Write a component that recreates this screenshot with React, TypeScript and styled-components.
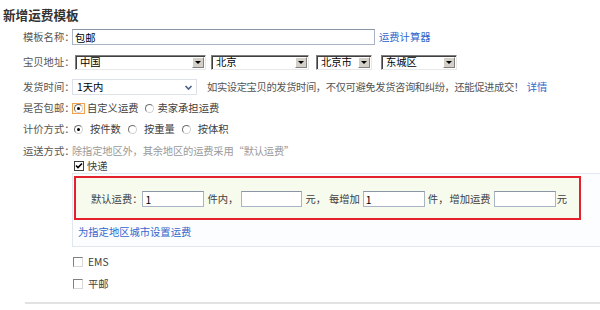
import React from 'react';
import styled, { createGlobalStyle } from 'styled-components';

const GlobalStyle = createGlobalStyle`
  html, body { margin: 0; padding: 0; background: #fff; }
  body {
    font-family: "Noto Sans CJK SC", "Noto Sans", sans-serif;
    font-size: 10.3px;
    line-height: 12px;
    color: #404040;
  }
`;

const Page = styled.div`
  width: 600px;
  height: 310px;
  overflow: hidden;
  background: #fff;
`;

const Title = styled.h2`
  margin: 8px 0 0 3px;
  font-size: 12.6px;
  line-height: 14px;
  font-weight: bold;
  color: #333;
`;

const Row = styled.div<{ $h: number; $mt: number; $pl?: number }>`
  display: flex;
  align-items: center;
  height: ${(p) => p.$h}px;
  margin-top: ${(p) => p.$mt}px;
  padding-left: ${(p) => (p.$pl ?? 23)}px;
  white-space: nowrap;
`;

const Label = styled.span`
  width: 49px;
  flex: none;
  color: #555;
`;

const Text = styled.span<{ $ml?: number; $mr?: number; $c?: string; $ls?: number }>`
  margin-left: ${(p) => p.$ml ?? 0}px;
  margin-right: ${(p) => p.$mr ?? 0}px;
  color: ${(p) => p.$c ?? '#404040'};
  letter-spacing: ${(p) => p.$ls ?? 0}px;
`;

const Link = styled.a<{ $ml?: number }>`
  color: #3366cc;
  text-decoration: none;
  margin-left: ${(p) => p.$ml ?? 0}px;
  cursor: pointer;
`;

const TextInput = styled.input<{ $w: number; $mx?: number }>`
  width: ${(p) => p.$w}px;
  height: 16px;
  box-sizing: border-box;
  margin: 0 ${(p) => p.$mx ?? 0}px;
  padding: 0 2px;
  border: 1px solid #a9b4c4;
  border-top-color: #8a95a6;
  background: #fff;
  font: inherit;
  color: #000;
  outline: none;
`;

const ClassicSelect = styled.div<{ $w: number; $ml: number }>`
  width: ${(p) => p.$w}px;
  height: 15px;
  margin-left: ${(p) => p.$ml}px;
  box-sizing: border-box;
  display: flex;
  align-items: center;
  border: 1px solid;
  border-color: #808080 #e8e8e8 #e8e8e8 #808080;
  box-shadow: inset 1px 1px 0 #404040;
  background: #fff;
  padding-left: 4px;
  color: #000;
`;

const SelectValue = styled.span`
  flex: 1;
`;

const ClassicArrow = styled.span`
  width: 12px;
  height: 11px;
  margin-right: 1px;
  box-sizing: border-box;
  background: #d4d0c8;
  border: 1px solid;
  border-color: #fff #808080 #808080 #fff;
  display: flex;
  align-items: center;
  justify-content: center;
  &::after {
    content: '';
    border-left: 3px solid transparent;
    border-right: 3px solid transparent;
    border-top: 3px solid #000;
  }
`;

const XpSelect = styled.div<{ $w: number }>`
  width: ${(p) => p.$w}px;
  height: 16px;
  box-sizing: border-box;
  display: flex;
  align-items: center;
  border: 1px solid #dde2ea;
  background: #fff;
  padding-left: 4px;
  color: #000;
`;

const XpArrow = styled.span`
  width: 14px;
  height: 14px;
  margin-right: 1px;
  display: flex;
  align-items: center;
  justify-content: center;
`;

const RadioWrap = styled.span<{ $focus?: boolean; $ml?: number }>`
  display: inline-flex;
  align-items: center;
  justify-content: center;
  width: 13px;
  height: 11px;
  margin-left: ${(p) => p.$ml ?? 0}px;
  box-sizing: border-box;
  border: 1px solid ${(p) => (p.$focus ? '#f0a050' : 'transparent')};
  background: ${(p) => (p.$focus ? '#fff6e8' : 'transparent')};
`;

const Radio = styled.span<{ $checked?: boolean }>`
  width: 9px;
  height: 9px;
  border-radius: 50%;
  box-sizing: border-box;
  border: 1px solid;
  border-color: #707070 #d0d0d0 #d0d0d0 #707070;
  background: #fff;
  display: flex;
  align-items: center;
  justify-content: center;
  &::after {
    content: '';
    display: ${(p) => (p.$checked ? 'block' : 'none')};
    width: 3px;
    height: 3px;
    border-radius: 50%;
    background: #000;
  }
`;

const Check = styled.span<{ $checked?: boolean }>`
  width: 10px;
  height: 10px;
  flex: none;
  box-sizing: border-box;
  border: 1px solid;
  border-color: ${(p) => (p.$checked ? '#404040' : '#808080 #d8d8d8 #d8d8d8 #808080')};
  background: #fff;
  display: flex;
  align-items: center;
  justify-content: center;
`;

const Panel = styled.div`
  margin: 1px 0 0 72px;
  height: 74px;
  box-sizing: border-box;
  border: 1px solid #e1e7ef;
  border-right: none;
  background: #fcfdff;
`;

const Highlight = styled.div`
  margin: 2px 0 0 1px;
  width: 507px;
  height: 44px;
  box-sizing: border-box;
  border: 2px solid #e3202b;
  background: #f7fbee;
  display: flex;
  align-items: center;
  padding: 2px 0 0 15px;
  white-space: nowrap;
`;

const PanelLink = styled.div`
  margin: 6px 0 0 5px;
  height: 12px;
  line-height: 12px;
`;

const Divider = styled.div`
  margin: 11px 0 0 25px;
  height: 2px;
  background: #e2e2e2;
`;

const CheckMark = () => (
  <svg width="8" height="8" viewBox="0 0 8 8">
    <path d="M1 3.5 L3 5.5 L7 1.5" stroke="#000" strokeWidth="1.6" fill="none" />
  </svg>
);

const Chevron = () => (
  <svg width="9" height="7" viewBox="0 0 9 7">
    <path d="M1.5 2 L4.5 5 L7.5 2" stroke="#4d6185" strokeWidth="1.6" fill="none" />
  </svg>
);

export default function App() {
  return (
    <Page>
      <GlobalStyle />
      <Title>新增运费模板</Title>

      <Row $h={20} $mt={5}>
        <Label>模板名称：</Label>
        <TextInput $w={303} defaultValue="包邮" />
        <Link $ml={4}>运费计算器</Link>
      </Row>

      <Row $h={20} $mt={5}>
        <Label>宝贝地址：</Label>
        <ClassicSelect $w={131} $ml={3}>
          <SelectValue>中国</SelectValue>
          <ClassicArrow />
        </ClassicSelect>
        <ClassicSelect $w={98} $ml={5}>
          <SelectValue>北京</SelectValue>
          <ClassicArrow />
        </ClassicSelect>
        <ClassicSelect $w={56} $ml={7}>
          <SelectValue>北京市</SelectValue>
          <ClassicArrow />
        </ClassicSelect>
        <ClassicSelect $w={76} $ml={9}>
          <SelectValue>东城区</SelectValue>
          <ClassicArrow />
        </ClassicSelect>
      </Row>

      <Row $h={20} $mt={5}>
        <Label>发货时间：</Label>
        <XpSelect $w={125}>
          <SelectValue>1天内</SelectValue>
          <XpArrow>
            <Chevron />
          </XpArrow>
        </XpSelect>
        <Text $ml={10} $c="#555" $ls={-0.4}>
          如实设定宝贝的发货时间，不仅可避免发货咨询和纠纷，还能促进成交！
        </Text>
        <Link $ml={3}>详情</Link>
      </Row>

      <Row $h={16} $mt={3}>
        <Label>是否包邮：</Label>
        <RadioWrap $focus>
          <Radio $checked />
        </RadioWrap>
        <Text $ml={2}>自定义运费</Text>
        <RadioWrap $ml={5}>
          <Radio />
        </RadioWrap>
        <Text $ml={1}>卖家承担运费</Text>
      </Row>

      <Row $h={16} $mt={5}>
        <Label>计价方式：</Label>
        <RadioWrap>
          <Radio $checked />
        </RadioWrap>
        <Text $ml={5}>按件数</Text>
        <RadioWrap $ml={5}>
          <Radio />
        </RadioWrap>
        <Text $ml={5}>按重量</Text>
        <RadioWrap $ml={5}>
          <Radio />
        </RadioWrap>
        <Text $ml={5}>按体积</Text>
      </Row>

      <Row $h={14} $mt={7}>
        <Label>运送方式：</Label>
        <Text $c="#999" $ls={-0.2}>除指定地区外，其余地区的运费采用“默认运费”</Text>
      </Row>

      <Row $h={12} $mt={2} $pl={74}>
        <Check $checked>
          <CheckMark />
        </Check>
        <Text $ml={3}>快递</Text>
      </Row>

      <Panel>
        <Highlight>
          <Text>默认运费：</Text>
          <TextInput $w={62} $mx={0} defaultValue="1" />
          <Text $ml={3}>件内，</Text>
          <TextInput $w={61} $mx={3} />
          <Text>元，</Text>
          <Text $ml={3}>每增加</Text>
          <TextInput $w={62} $mx={3} defaultValue="1" />
          <Text>件，</Text>
          <Text $ml={1}>增加运费</Text>
          <TextInput $w={62} $mx={3} />
          <Text $ml={-2}>元</Text>
        </Highlight>
        <PanelLink>
          <Link>为指定地区城市设置运费</Link>
        </PanelLink>
      </Panel>

      <Row $h={14} $mt={8} $pl={73}>
        <Check />
        <Text $ml={5}>EMS</Text>
      </Row>
      <Row $h={14} $mt={8} $pl={73}>
        <Check />
        <Text $ml={5}>平邮</Text>
      </Row>

      <Divider />
    </Page>
  );
}
